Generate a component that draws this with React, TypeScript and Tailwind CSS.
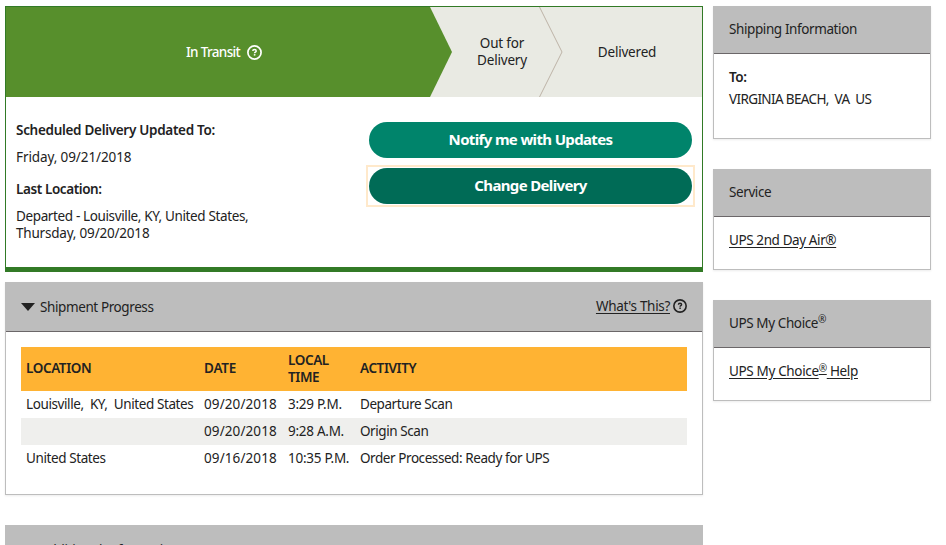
import type { ReactNode } from "react";

interface PanelProps {
  title: ReactNode;
  className?: string;
  children: ReactNode;
}

const scans = [
  {
    location: "Louisville,\u00a0 KY,\u00a0 United States",
    date: "09/20/2018",
    time: "3:29 P.M.",
    activity: "Departure Scan",
  },
  {
    location: "",
    date: "09/20/2018",
    time: "9:28 A.M.",
    activity: "Origin Scan",
  },
  {
    location: "United States",
    date: "09/16/2018",
    time: "10:35 P.M.",
    activity: "Order Processed: Ready for UPS",
  },
];

const HelpIcon = ({ className }: { className?: string }) => (
  <svg viewBox="0 0 15 15" fill="none" stroke="currentColor" className={className}>
    <circle cx="7.5" cy="7.5" r="6.6" strokeWidth="1.7" />
    <path d="M5.8 6.1c0-.9.7-1.5 1.7-1.5s1.7.5 1.7 1.4c0 1.2-1.6 1.1-1.6 2.3" strokeWidth="1.5" />
    <path d="M7.6 9.1v1.5" strokeWidth="1.6" />
  </svg>
);

const Caret = () => (
  <svg viewBox="0 0 14 8" className="h-2 w-3.5 shrink-0" fill="#222">
    <path d="M0 0h14L7 8z" />
  </svg>
);

const SidePanel = ({ title, className = "", children }: PanelProps) => (
  <section
    className={`flex flex-col border border-[#bdbdbd] shadow-[0_1px_2px_rgba(0,0,0,0.08)] ${className}`}
  >
    <h2 className="flex h-[47px] shrink-0 items-center border-b border-[#6b6769] bg-[#bdbdbd] px-[15px] pb-px">
      {title}
    </h2>
    <div className="px-[15px] pt-[15px]">{children}</div>
  </section>
);

const StatusBar = () => (
  <div className="relative grid h-[90px] grid-cols-[424px_110px_162px] bg-[#e9eae3] text-center tracking-[-0.2px]">
    <svg
      viewBox="0 0 696 90"
      className="absolute inset-0 h-full w-full"
      fill="none"
    >
      <path d="M0 0h424l22 45-22 45H0z" fill="#578f2c" />
      <path d="M533.5 0 556 45l-22.5 45" stroke="#bdb3a7" />
    </svg>
    <div className="relative flex items-center justify-center gap-[7px] pl-[12px] text-white">
      <span className="font-medium tracking-[-0.65px]">In Transit</span>
      <HelpIcon className="size-[15px]" />
    </div>
    <div className="relative flex items-center justify-center pl-[34px]">
      <span>
        Out for
        <br />
        Delivery
      </span>
    </div>
    <div className="relative flex items-center justify-center pl-[12px]">
      Delivered
    </div>
  </div>
);

export default function App() {
  return (
    <div className="flex h-[545px] gap-2.5 overflow-hidden bg-white pl-[5px] pt-[6px] font-['Noto_Sans','Open_Sans',sans-serif] text-[13.5px] leading-[17px] tracking-[-0.4px] text-[#222]">
      <main className="w-[698px] shrink-0">
        <section className="flex h-[266px] flex-col border border-b-[5px] border-[#327a26]">
          <StatusBar />
          <div className="flex justify-between pl-[10px] pr-[10px] pt-[25px]">
            <dl>
              <dt className="font-semibold tracking-[-0.3px]">
                Scheduled Delivery Updated To:
              </dt>
              <dd className="mt-[10px] tracking-[-0.1px]">Friday, 09/21/2018</dd>
              <dt className="mt-[15px] font-semibold">Last Location:</dt>
              <dd className="mt-[10px] tracking-[-0.37px]">
                Departed - Louisville, KY, United States,
                <br />
                <span className="tracking-[-0.2px]">Thursday, 09/20/2018</span>
              </dd>
            </dl>
            <div className="flex w-[323px] flex-col gap-2.5 text-[15px] font-bold tracking-[-0.65px] text-white">
              <button className="h-9 rounded-full bg-[#00846b] pb-[2px]">
                Notify me with Updates
              </button>
              <div className="flex outline-2 outline-offset-1 outline-[#ffe9cb]">
                <button className="h-9 grow rounded-full bg-[#006b56] pb-[2px]">
                  Change Delivery
                </button>
              </div>
            </div>
          </div>
        </section>

        <section className="mt-[10px] h-[213px] border border-[#bdbdbd] shadow-[0_1px_2px_rgba(0,0,0,0.08)]">
          <h2 className="flex h-[49px] items-center justify-between border-b border-[#6b6769] bg-[#bdbdbd] px-[15px]">
            <span className="flex items-center gap-[5px]">
              <Caret />
              <span className="pt-px">Shipment Progress</span>
            </span>
            <span className="flex items-center gap-[3px] pb-[2px]">
              <a className="tracking-[-0.32px] underline underline-offset-2">
                What's This?
              </a>
              <HelpIcon className="size-3.5" />
            </span>
          </h2>
          <table className="ml-[15px] mt-[15px] w-[666px] table-fixed">
            <colgroup>
              <col className="w-[178px]" />
              <col className="w-[84px]" />
              <col className="w-[72px]" />
              <col />
            </colgroup>
            <thead>
              <tr className="h-[44px] bg-[#ffb333] text-left">
                <th className="px-[5px] pb-[2px] font-semibold">LOCATION</th>
                <th className="px-[5px] pb-[2px] font-semibold tracking-[-0.2px]">
                  DATE
                </th>
                <th className="px-[5px] font-semibold">
                  LOCAL
                  <br />
                  TIME
                </th>
                <th className="px-[5px] pb-[2px] font-semibold">ACTIVITY</th>
              </tr>
            </thead>
            <tbody>
              {scans.map((scan) => (
                <tr
                  key={scan.date + scan.time}
                  className="h-[27px] whitespace-nowrap even:bg-[#efefed]"
                >
                  <td className="px-[5px]">{scan.location}</td>
                  <td className="px-[5px] tracking-[0.1px]">{scan.date}</td>
                  <td className="px-[5px] tracking-[-0.27px]">{scan.time}</td>
                  <td className="px-[5px] tracking-[-0.43px]">
                    {scan.activity}
                  </td>
                </tr>
              ))}
            </tbody>
          </table>
        </section>

        <section className="mt-[30px] h-[60px] bg-[#bdbdbd]">
          <h2 className="flex items-center gap-[5px] pl-4 pt-[17px] tracking-[-0.25px]">
            <Caret />
            Additional Information
          </h2>
        </section>
      </main>

      <aside className="w-[218px] shrink-0">
        <SidePanel title="Shipping Information" className="h-[133px]">
          <p className="font-semibold">To:</p>
          <p className="mt-[5px] tracking-[-0.63px]">
            VIRGINIA BEACH,&nbsp; VA&nbsp; US
          </p>
        </SidePanel>
        <SidePanel title="Service" className="mt-[30px] h-[101px]">
          <a className="underline underline-offset-2">UPS 2nd Day Air®</a>
        </SidePanel>
        <SidePanel
          title={
            <span>
              UPS My Choice<sup className="-top-[0.45em]">®</sup>
            </span>
          }
          className="mt-[30px] h-[101px]"
        >
          <a className="tracking-[-0.35px] underline underline-offset-2">
            UPS My Choice
            <sup className="-top-[0.4em] inline-block underline underline-offset-2">
              ®
            </sup>{" "}
            Help
          </a>
        </SidePanel>
      </aside>
    </div>
  );
}
